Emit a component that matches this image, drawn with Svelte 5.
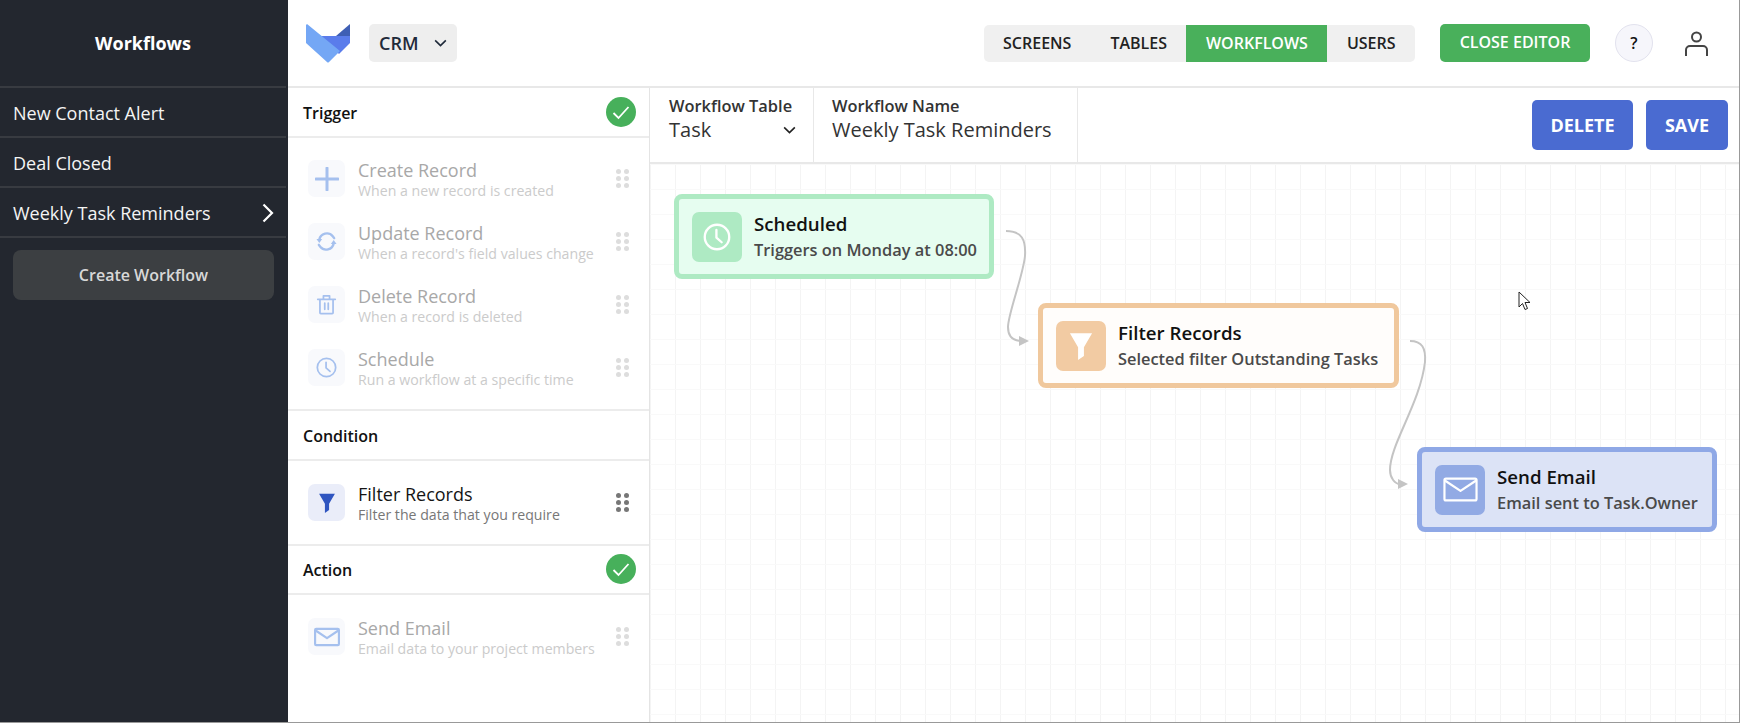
<script>
    const workflows = [
        { name: 'New Contact Alert' },
        { name: 'Deal Closed' },
        { name: 'Weekly Task Reminders', active: true }
    ];
    const navItems = ['Screens', 'Tables', 'Workflows', 'Users'];
    const triggers = [
        { icon: 'plus', title: 'Create Record', sub: 'When a new record is created' },
        { icon: 'sync', title: 'Update Record', sub: "When a record's field values change" },
        { icon: 'trash', title: 'Delete Record', sub: 'When a record is deleted' },
        { icon: 'clock', title: 'Schedule', sub: 'Run a workflow at a specific time' }
    ];
</script>

{#snippet icon(name)}
    <svg class="glyph {name}" viewBox="0 0 24 24" fill="none" stroke="currentColor" stroke-width="2" stroke-linecap="round" stroke-linejoin="round">
        {#if name === 'plus'}
            <path d="M12 1v22M1 12h22" stroke-width="3" />
        {:else if name === 'sync'}
            <path d="M4.500 10a8 8 0 0 1 14-3.500L20 8.500M19.500 14a8 8 0 0 1-14 3.500L4 15.500" stroke-width="2.500" />
            <path d="M1.500 9.500h6l-3 4zM22.500 14.500h-6l3-4z" fill="currentColor" stroke="none" />
        {:else if name === 'trash'}
            <path d="M2 6h20M8.500 5V2h7v3M4.500 6v15.500a1 1 0 0 0 1 1h13a1 1 0 0 0 1-1V6M10 10.500v7M14 10.500v7" />
        {:else if name === 'clock'}
            <circle cx="12" cy="12" r="10.500" />
            <path d="M11.500 6v6.500l4.500 4" />
        {:else if name === 'funnel'}
            <path d="M2.500 1h19L14.500 13v7.500L9.500 24V13z" fill="currentColor" stroke="none" />
        {:else if name === 'mail'}
            <rect x="1" y="4.500" width="22" height="15" rx="1" />
            <path d="M1.500 6l10.500 7 10.500-7" />
        {/if}
    </svg>
{/snippet}

{#snippet dots()}
    <div class="dots">
        {#each Array(6) as _}
            <span></span>
        {/each}
    </div>
{/snippet}

{#snippet check()}
    <svg class="check" viewBox="0 0 30 30">
        <circle cx="15" cy="15" r="15" fill="#47b05b" />
        <path d="M7.500 16l5 5L22.500 10" fill="none" stroke="#fff" stroke-width="1.800" />
    </svg>
{/snippet}

{#snippet item(data, faded)}
    <div class="item" class:faded>
        <div class="tile">{@render icon(data.icon)}</div>
        <div class="item-text">
            <div class="item-title">{data.title}</div>
            <div class="item-sub">{data.sub}</div>
        </div>
        {@render dots()}
    </div>
{/snippet}

<div class="app">
    <aside class="sidebar">
        <div class="sidebar-title">Workflows</div>
        {#each workflows as wf}
            <div class="sidebar-row">
                <span>{wf.name}</span>
                {#if wf.active}
                    <svg class="chevron-right" viewBox="0 0 12 20" fill="none" stroke="#fff" stroke-width="2.200">
                        <path d="M1.500 1.500L10 10l-8.500 8.500" />
                    </svg>
                {/if}
            </div>
        {/each}
        <button class="create">Create Workflow</button>
    </aside>

    <div class="main">
        <header class="topbar">
            <svg class="logo" viewBox="0 0 44 39">
                <path d="M44 0v12H30z" fill="#3f5fb5" />
                <path d="M14 12h30v7L33 30z" fill="#5a7ceb" />
                <path d="M1 0l33 27-11 11q-1 1-2 0L0 19V1z" fill="#74a7f5" />
            </svg>
            <div class="project">
                CRM
                <svg viewBox="0 0 14 9" fill="none" stroke="#1f2a3a" stroke-width="1.800"><path d="M1 1.500l6 6 6-6" /></svg>
            </div>
            <nav class="nav">
                {#each navItems as nav}
                    <span class:active={nav === 'Workflows'}>{nav}</span>
                {/each}
            </nav>
            <button class="close">Close Editor</button>
            <div class="help">?</div>
            <svg class="user" viewBox="0 0 23 25" fill="none" stroke="#444" stroke-width="2">
                <circle cx="11.500" cy="6" r="4.500" />
                <path d="M1 25v-6a4 4 0 0 1 4-4h13a4 4 0 0 1 4 4v6" />
            </svg>
        </header>

        <div class="body">
            <section class="panel">
                <div class="panel-head">Trigger {@render check()}</div>
                <div class="list first">
                    {#each triggers as t}
                        {@render item(t, true)}
                    {/each}
                </div>
                <div class="panel-head">Condition</div>
                <div class="list">
                    {@render item({ icon: 'funnel', title: 'Filter Records', sub: 'Filter the data that you require' }, false)}
                </div>
                <div class="panel-head short">Action {@render check()}</div>
                <div class="list">
                    {@render item({ icon: 'mail', title: 'Send Email', sub: 'Email data to your project members' }, true)}
                </div>
            </section>

            <section class="editor">
                <div class="toolbar">
                    <div class="field table-field">
                        <label>Workflow Table</label>
                        <div class="value">
                            Task
                            <svg viewBox="0 0 14 9" fill="none" stroke="#222" stroke-width="1.800"><path d="M1 1.500l6 6 6-6" /></svg>
                        </div>
                    </div>
                    <div class="field name-field">
                        <label>Workflow Name</label>
                        <div class="value">Weekly Task Reminders</div>
                    </div>
                    <div class="actions">
                        <button class="primary delete">Delete</button>
                        <button class="primary save">Save</button>
                    </div>
                </div>

                <div class="canvas">
                    <svg class="wires" width="1089" height="558" fill="none">
                        <path d="M356 67C372 67 376 76 375 92C373 112 358 150 358 163C358 172 363 177 372 177" stroke="#c4c4c4" stroke-width="2" />
                        <path d="M379 177l-10-5v10z" fill="#c4c4c4" />
                        <path d="M760 177C772 177 776 184 775 198C770 240 740 280 740 306C740 314 745 320 750 320" stroke="#c4c4c4" stroke-width="2" />
                        <path d="M758 320l-10-5v10z" fill="#c4c4c4" />
                    </svg>

                    <div class="node green" style="left:24px;top:30px;width:320px">
                        <div class="node-icon">{@render icon('clock')}</div>
                        <div>
                            <div class="node-title">Scheduled</div>
                            <div class="node-sub">Triggers on Monday at 08:00</div>
                        </div>
                    </div>
                    <div class="node orange" style="left:388px;top:139px;width:361px">
                        <div class="node-icon">{@render icon('funnel')}</div>
                        <div>
                            <div class="node-title">Filter Records</div>
                            <div class="node-sub">Selected filter Outstanding Tasks</div>
                        </div>
                    </div>
                    <div class="node blue" style="left:767px;top:283px;width:300px">
                        <div class="node-icon">{@render icon('mail')}</div>
                        <div>
                            <div class="node-title">Send Email</div>
                            <div class="node-sub">Email sent to Task.Owner</div>
                        </div>
                    </div>

                    <svg class="cursor" width="14" height="20" viewBox="0 0 14 20">
                        <path d="M1 1v15l3.500-3.500 2.500 6 2.500-1-2.500-6h5z" fill="#fff" stroke="#222" stroke-width="1" />
                    </svg>
                </div>
            </section>
        </div>
    </div>
</div>

<style>
    :global(body) {
        margin: 0;
        font-family: 'Open Sans', sans-serif;
        color: #111;
        background: #fff;
    }

    button {
        font-family: inherit;
        border: none;
        cursor: pointer;
    }

    .app {
        display: flex;
        height: 723px;
        box-sizing: border-box;
        border-bottom: 1px solid #999;
        border-right: 1px solid #999;
        overflow: hidden;
    }

    /* left list of workflows */
    .sidebar {
        width: 288px;
        flex: none;
        background: #23272f;
        color: #fff;
        padding-right: 2px;
        box-sizing: border-box;
    }
    .sidebar-title {
        height: 86px;
        display: flex;
        align-items: center;
        justify-content: center;
        font-size: 18px;
        font-weight: 700;
        border-bottom: 2px solid #383b41;
    }
    .sidebar-row {
        height: 46px;
        display: flex;
        align-items: center;
        justify-content: space-between;
        padding: 2px 13px 0;
        font-size: 18px;
        color: #f4f4f4;
        border-bottom: 2px solid #383b41;
    }
    .chevron-right {
        width: 12px;
        height: 20px;
        margin-right: -1px;
    }
    .create {
        display: block;
        margin: 12px 0 0 13px;
        width: 261px;
        height: 50px;
        border-radius: 8px;
        background: #3c3f42;
        color: #d8d8d8;
        font-size: 16px;
        font-weight: 600;
    }

    .main {
        flex: 1;
        display: flex;
        flex-direction: column;
        min-width: 0;
    }

    /* top bar */
    .topbar {
        height: 86px;
        flex: none;
        display: flex;
        align-items: center;
        padding: 0 31px 0 18px;
        border-bottom: 2px solid #e8e8e8;
    }
    .logo {
        width: 44px;
        height: 39px;
    }
    .project {
        margin-left: 19px;
        width: 88px;
        height: 38px;
        box-sizing: border-box;
        padding: 0 10px;
        display: flex;
        align-items: center;
        justify-content: space-between;
        background: #eeeeee;
        border-radius: 5px;
        font-size: 18px;
        font-weight: 600;
        color: #1f2a3a;
    }
    .project svg {
        width: 13px;
        height: 8px;
    }
    .nav {
        margin-left: auto;
        display: flex;
        height: 37px;
        background: #f0f0f0;
        border-radius: 5px;
        overflow: hidden;
    }
    .nav span {
        display: flex;
        align-items: center;
        padding: 0 19.5px;
        font-size: 16px;
        font-weight: 600;
        text-transform: uppercase;
        color: #222;
    }
    .nav span.active {
        background: #49b05b;
        color: #fff;
    }
    .close {
        margin-left: 25px;
        width: 150px;
        height: 38px;
        padding: 0 0 3px;
        border-radius: 5px;
        background: #49b05b;
        color: #fff;
        font-size: 16px;
        font-weight: 600;
        text-transform: uppercase;
    }
    .help {
        margin-left: 25px;
        width: 38px;
        height: 38px;
        box-sizing: border-box;
        border-radius: 50%;
        border: 1px solid #e2e2ee;
        background: #f6f6fb;
        display: flex;
        align-items: center;
        justify-content: center;
        font-size: 16px;
        font-weight: 600;
    }
    .user {
        margin-left: 32px;
        width: 23px;
        height: 25px;
    }

    .body {
        flex: 1;
        display: flex;
        min-height: 0;
    }

    /* palette of steps */
    .panel {
        width: 362px;
        flex: none;
        box-sizing: border-box;
        border-right: 1px solid #e4e4e4;
    }
    .panel-head {
        height: 47px;
        display: flex;
        align-items: center;
        justify-content: space-between;
        padding: 1px 13px 0 15px;
        font-size: 16px;
        font-weight: 600;
        border-bottom: 2px solid #ececec;
    }
    .panel-head.short {
        height: 47px;
        padding-top: 0;
    }
    .check {
        width: 30px;
        height: 30px;
        margin-top: -1px;
    }
    .list {
        display: flex;
        flex-direction: column;
        gap: 26px;
        padding: 23px 0;
        border-bottom: 2px solid #ececec;
    }
    .list.first {
        padding-top: 22px;
    }
    .list:last-child {
        border-bottom: none;
    }
    .item {
        height: 37px;
        display: flex;
        align-items: center;
        padding: 0 20px;
    }
    .tile {
        width: 37px;
        height: 37px;
        flex: none;
        border-radius: 7px;
        background: #eaedf9;
        color: #2f55c0;
        display: flex;
        align-items: center;
        justify-content: center;
    }
    .glyph {
        width: 24px;
        height: 24px;
    }
    .tile .sync {
        width: 23px;
        height: 23px;
    }
    .tile .trash,
    .tile .clock {
        width: 21px;
        height: 21px;
    }
    .tile .funnel {
        width: 20px;
        height: 20px;
    }
    .tile .mail {
        width: 26px;
        height: 26px;
    }
    .item.faded .tile {
        background: #f8f9fc;
        color: #a5c0ee;
    }
    .item-text {
        flex: 1;
        margin-left: 13px;
        padding-top: 3px;
        min-width: 0;
    }
    .item-title {
        font-size: 18px;
        line-height: 22px;
        color: #151515;
    }
    .item-sub {
        font-size: 14.15px;
        line-height: 20px;
        color: #777;
    }
    .item.faded .item-title {
        color: #a8a8a8;
    }
    .item.faded .item-sub {
        color: #cbcbcb;
    }
    .dots {
        display: grid;
        grid-template-columns: 5px 5px;
        gap: 2px 3px;
    }
    .dots span {
        width: 5px;
        height: 5px;
        border-radius: 50%;
        background: #777;
    }
    .item.faded .dots span {
        background: #ddd;
    }

    /* workflow editor */
    .editor {
        flex: 1;
        display: flex;
        flex-direction: column;
        min-width: 0;
    }
    .toolbar {
        height: 74px;
        flex: none;
        display: flex;
        border-bottom: 2px solid #e8e8e8;
    }
    .field {
        box-sizing: border-box;
        padding: 8px 0 0 19px;
        border-right: 1px solid #e8e8e8;
    }
    .table-field {
        width: 164px;
    }
    .name-field {
        width: 264px;
        padding-left: 18px;
    }
    .field label {
        display: block;
        font-size: 16.4px;
        line-height: 20px;
        font-weight: 600;
        color: #333;
    }
    .field .value {
        display: flex;
        align-items: center;
        justify-content: space-between;
        padding-right: 17px;
        font-size: 20px;
        line-height: 28px;
        color: #333;
    }
    .field .value svg {
        width: 13px;
        height: 8px;
    }
    .actions {
        margin-left: auto;
        display: flex;
        gap: 13px;
        padding: 12px 11px 0 0;
    }
    .primary {
        height: 50px;
        border-radius: 5px;
        background: #4a6bd1;
        color: #fff;
        font-size: 18px;
        font-weight: 700;
        text-transform: uppercase;
    }
    .delete {
        width: 101px;
    }
    .save {
        width: 82px;
    }
    .canvas {
        position: relative;
        flex: 1;
        background-image: linear-gradient(#f9f9f9 1px, transparent 1px),
            linear-gradient(90deg, #f4f4f4 1px, transparent 1px);
        background-size: 25px 25px;
    }
    .wires {
        position: absolute;
        left: 0;
        top: 0;
    }
    .cursor {
        position: absolute;
        left: 868px;
        top: 127px;
    }
    .node {
        position: absolute;
        height: 85px;
        box-sizing: border-box;
        padding: 0 13px;
        display: flex;
        align-items: center;
        gap: 12px;
        border: 5px solid;
        border-radius: 8px;
        white-space: nowrap;
    }
    .node-icon {
        width: 50px;
        height: 50px;
        flex: none;
        border-radius: 7px;
        color: #fff;
        display: flex;
        align-items: center;
        justify-content: center;
    }
    .node-icon .glyph {
        width: 28px;
        height: 28px;
    }
    .node-icon .mail {
        width: 35px;
        height: 35px;
        stroke-width: 1.500;
    }
    .node-title {
        margin: -1px 0 1px;
        font-size: 18.7px;
        line-height: 25px;
        font-weight: 600;
        color: #111;
    }
    .node-sub {
        font-size: 16.4px;
        line-height: 25px;
        font-weight: 600;
        color: #4a4a4a;
    }
    .green {
        background: #e6fdf0;
        border-color: #aeeac3;
    }
    .green .node-icon {
        background: #aeeac3;
    }
    .orange {
        background: #fffdfb;
        border-color: #f0c89d;
    }
    .orange .node-icon {
        background: #f2cba3;
    }
    .blue {
        background: #dce3f6;
        border-color: #8fa8e6;
    }
    .blue .node-icon {
        background: #92aae4;
    }
</style>
